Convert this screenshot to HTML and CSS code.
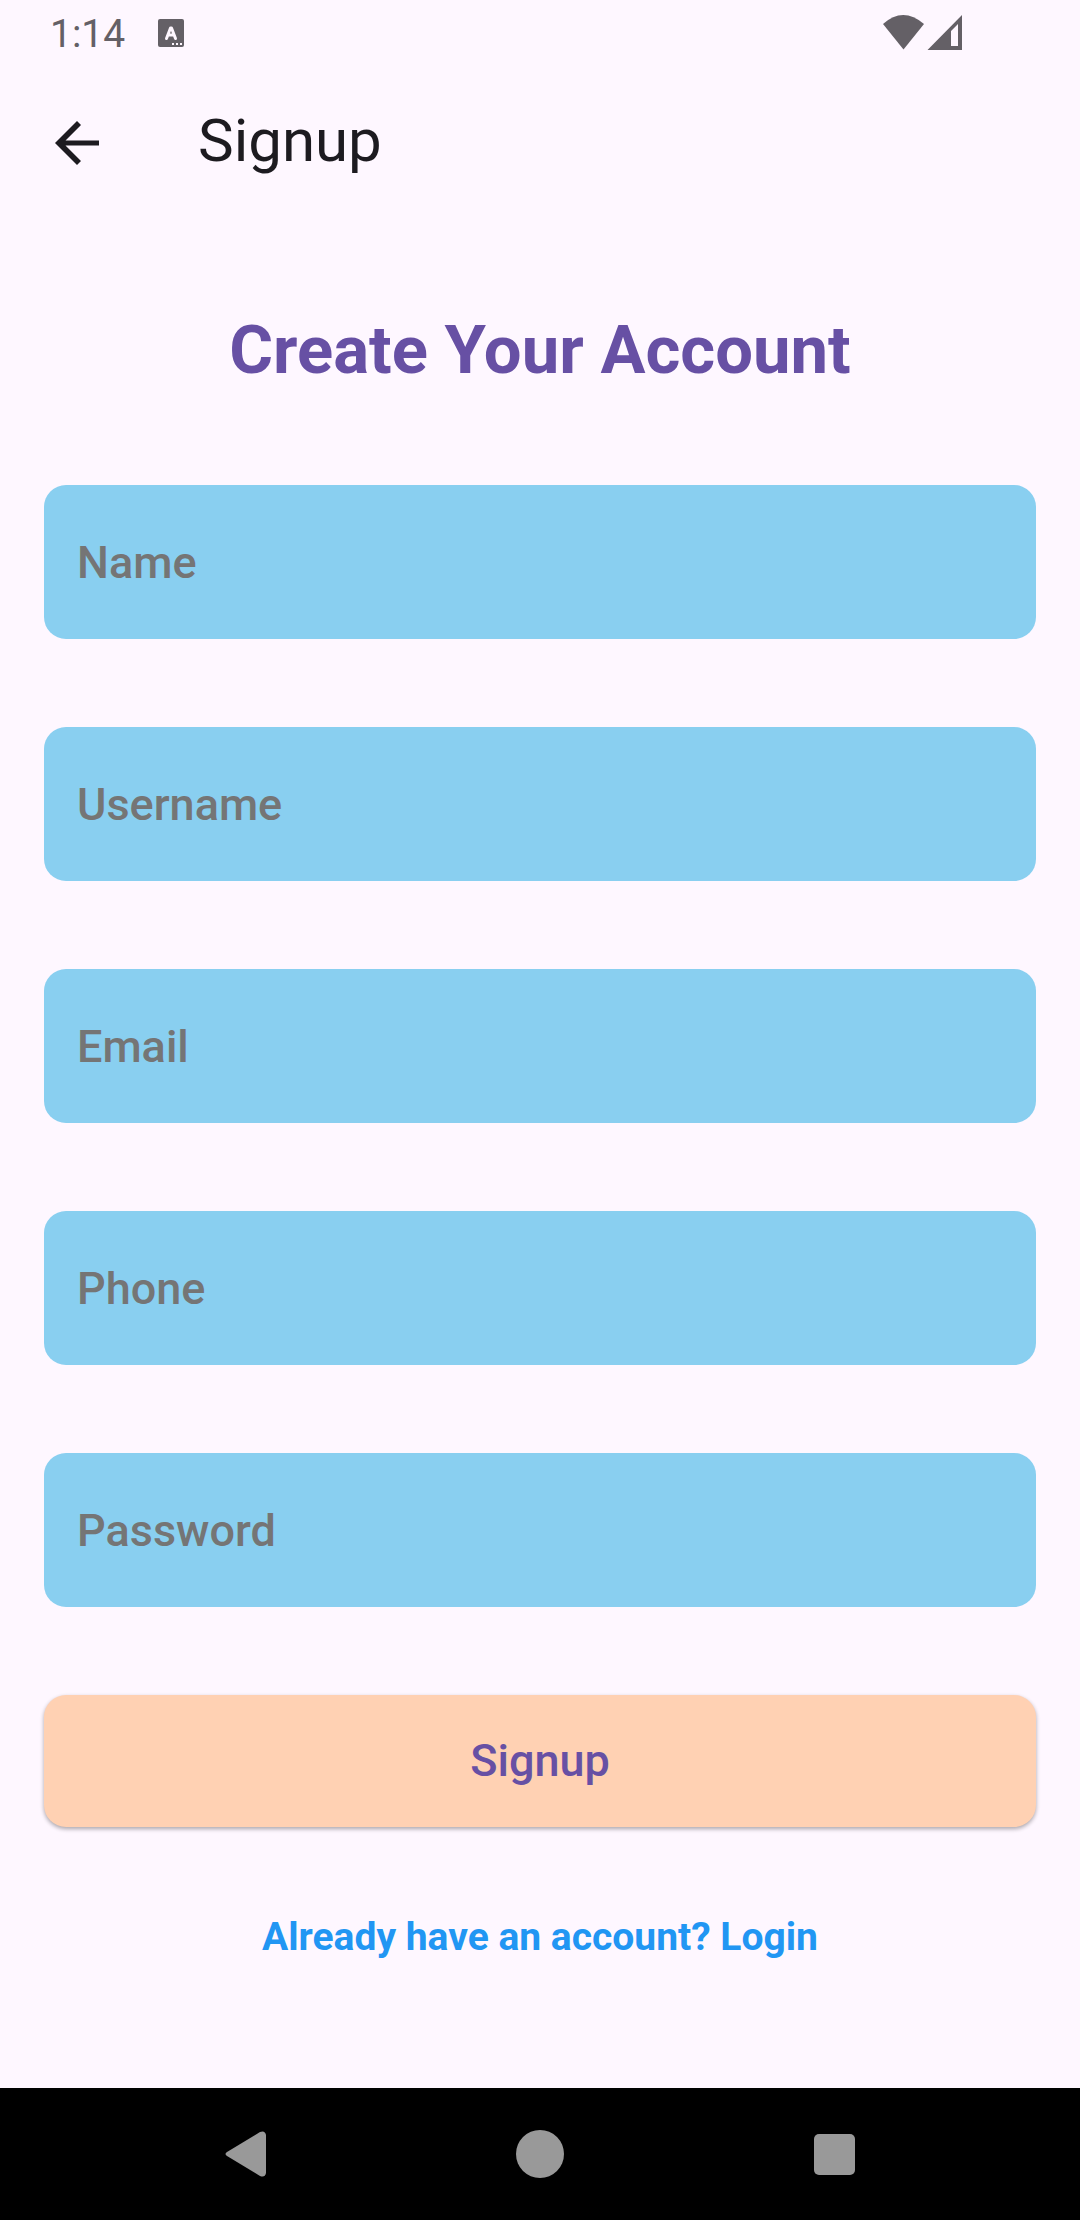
FILE: index.html
```html
<!DOCTYPE html>
<html lang="en">
<head>
<meta charset="utf-8">
<meta name="viewport" content="width=device-width, initial-scale=1">
<title>Signup</title>
<link rel="stylesheet" href="styles.css">
</head>
<body>
<div class="status">
  <span class="clock">1:14</span>
  <svg class="keyboard-icon" viewBox="0 0 26 30" aria-hidden="true"><rect width="26" height="28" rx="2" fill="#646066"/><path d="M8.500 19.500 12.500 9h1L17.500 19.500M10 16h6" fill="none" stroke="#fef7ff" stroke-width="3" stroke-linecap="round" stroke-linejoin="round"/><path d="M14 24h2v2h-2zM18 24h2v2h-2zM22 24h2v2h-2z" fill="#fef7ff"/></svg>
  <svg class="signal-icons" viewBox="0 0 80 38" aria-hidden="true"><path d="M1 9Q21-9 42 9L21.500 34.500Z" fill="#646066"/><path d="M45.500 35 80 0V35ZM69 16V31H76V9Z" fill="#646066" fill-rule="evenodd"/></svg>
</div>
<header class="app-bar">
  <button class="back" type="button" aria-label="Back"><svg viewBox="0 0 44 44" aria-hidden="true"><path d="M44 19.500H10.500L26 4 22 0 0 22 22 44 26 40 10.500 24.500H44Z" fill="#1d1b20"/></svg></button>
  <h1 class="title">Signup</h1>
</header>
<main class="content">
  <h2 class="heading">Create Your Account</h2>
  <form class="form">
    <input class="field" type="text" placeholder="Name" aria-label="Name">
    <input class="field" type="text" placeholder="Username" aria-label="Username">
    <input class="field" type="email" placeholder="Email" aria-label="Email">
    <input class="field" type="tel" placeholder="Phone" aria-label="Phone">
    <input class="field" type="password" placeholder="Password" aria-label="Password">
    <button class="submit" type="submit">Signup</button>
  </form>
  <a class="login" href="#login">Already have an account? Login</a>
</main>
<nav class="nav-bar" aria-label="System">
  <button class="nav-button" type="button" aria-label="Back"><svg viewBox="0 0 48 48" aria-hidden="true"><path d="M6 22 39 2q5-2 6 3V43q-1 5-6 3L6 26q-3-2 0-4Z" fill="#999"/></svg></button>
  <button class="nav-button" type="button" aria-label="Home"><svg viewBox="0 0 48 48" aria-hidden="true"><circle cx="24" cy="24" r="24" fill="#999"/></svg></button>
  <button class="nav-button" type="button" aria-label="Recents"><svg viewBox="0 0 48 48" aria-hidden="true"><rect x="3" y="4" width="41" height="41" rx="5" fill="#999"/></svg></button>
</nav>
</body>
</html>
```
FILE: styles.css
```css
* { box-sizing: border-box; }
body {
  margin: 0;
  min-height: 100vh;
  display: flex;
  flex-direction: column;
  background: #fef7ff;
  font-family: Roboto, "Liberation Sans", sans-serif;
}
svg { display: block; }
button { border: 0; padding: 0; background: none; font-family: inherit; }
.status { display: flex; align-items: center; height: 66px; padding: 2px 118px 0 50px; color: #646066; }
.clock { font-size: 39px; line-height: 64px; }
.keyboard-icon { width: 26px; height: 30px; margin-left: 33px; }
.signal-icons { width: 80px; height: 38px; margin-left: auto; }
.app-bar { display: flex; align-items: center; height: 154px; gap: 99px; padding-left: 55px; }
.back svg { width: 44px; height: 44px; }
.title { margin: 0; padding-bottom: 4px; font-size: 60px; line-height: 76px; font-weight: 400; color: #1d1b20; }
.content { flex: 1; display: flex; flex-direction: column; padding: 86px 44px 0; }
.heading { margin: 0 0 91px; font-size: 67px; line-height: 88px; font-weight: 700; text-align: center; color: #6750a4; }
.form { display: flex; flex-direction: column; gap: 88px; }
.field {
  width: 100%;
  height: 154px;
  border: 0;
  border-radius: 22px;
  padding: 0 33px;
  background: #89cff0;
  font: 500 45px/66px Roboto, "Liberation Sans", sans-serif;
}
.field::placeholder { color: #757575; opacity: 1; }
.submit {
  height: 132px;
  border-radius: 22px;
  background: #ffd1b3;
  box-shadow: 0 2px 4px #0005;
  font-size: 45px;
  line-height: 66px;
  font-weight: 500;
  color: #6750a4;
}
.login { align-self: center; margin-top: 88px; font-size: 39px; line-height: 44px; font-weight: 700; color: #2196f3; text-decoration: none; }
.nav-bar { display: flex; justify-content: center; align-items: center; gap: 247px; height: 132px; background: #000; }
.nav-button svg { width: 48px; height: 48px; }
```
